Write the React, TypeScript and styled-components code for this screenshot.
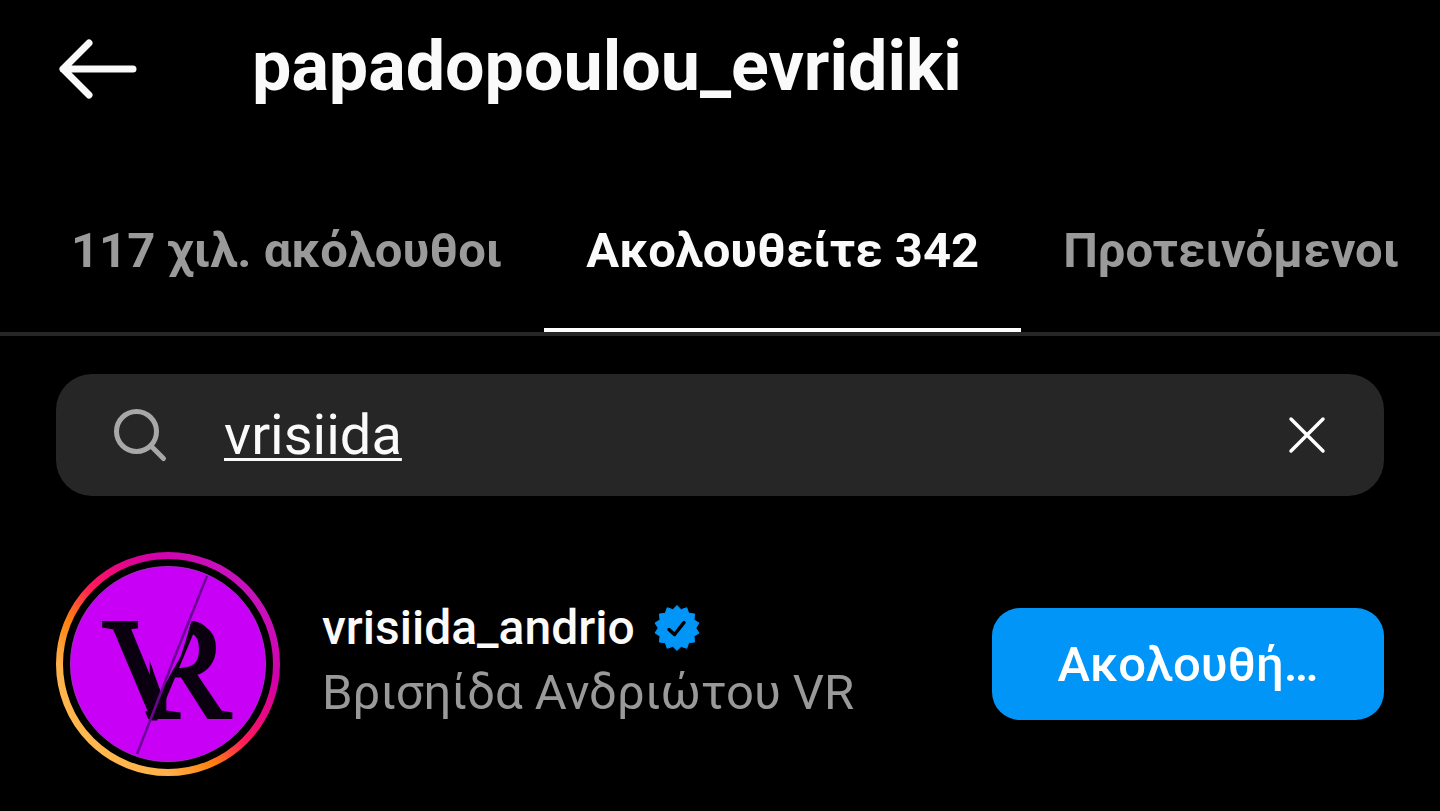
import React, { useState } from "react";
import styled, { createGlobalStyle } from "styled-components";

const GlobalStyle = createGlobalStyle`
  * { box-sizing: border-box; }
  body {
    margin: 0;
    background: #000;
    color: #fafafa;
    font-family: Roboto, "Noto Sans", sans-serif;
    overflow-x: hidden;
  }
  button, input { font: inherit; color: inherit; }
`;

const Header = styled.header`
  display: flex;
  align-items: center;
  gap: 112px;
  height: 136px;
  padding: 0 56px;
`;

const IconButton = styled.button`
  display: flex;
  flex: none;
  padding: 0;
  border: 0;
  background: none;
  cursor: pointer;
`;

const Title = styled.h1`
  margin: 0;
  padding-bottom: 4px;
  font-size: 70px;
  line-height: 84px;
  font-weight: 700;
`;

const TabBar = styled.nav`
  display: flex;
  margin-top: 32px;
  padding-left: 29px;
  border-bottom: 4px solid #262626;
  overflow: hidden;
`;

const Tab = styled.button<{ $active?: boolean }>`
  flex: none;
  height: 164px;
  padding: 6px 42px 0;
  border: 0;
  border-bottom: 4px solid ${(p) => (p.$active ? "#fff" : "transparent")};
  background: none;
  color: ${(p) => (p.$active ? "#fafafa" : "#9a9a9a")};
  font-size: 49px;
  line-height: 56px;
  font-weight: 700;
  white-space: nowrap;
  cursor: pointer;
`;

const Main = styled.main`
  display: flex;
  flex-direction: column;
  gap: 56px;
  padding: 38px 56px 35px;
`;

const SearchBox = styled.label`
  display: flex;
  align-items: center;
  height: 122px;
  padding: 0 56px;
  border-radius: 36px;
  background: #262626;
`;

const SearchInput = styled.input`
  flex: 1;
  min-width: 0;
  height: 80px;
  margin-left: 56px;
  padding: 0;
  border: 0;
  outline: 0;
  background: none;
  font-size: 56px;
  text-decoration: underline 3px;
  text-underline-offset: 4px;
`;

const UserRow = styled.article`
  display: flex;
  align-items: center;
`;

const AvatarLink = styled.a`
  display: flex;
  flex: none;
`;

const UserInfo = styled.div`
  flex: 1;
  min-width: 0;
  margin-left: 42px;
  padding-bottom: 8px;
`;

const Username = styled.a`
  display: flex;
  align-items: center;
  gap: 19px;
  color: #fafafa;
  font-size: 48px;
  line-height: 65px;
  font-weight: 500;
  text-decoration: none;
`;

const FullName = styled.p`
  margin: 0;
  color: #999;
  font-size: 49px;
  line-height: 65px;
  white-space: nowrap;
`;

const FollowButton = styled.button`
  flex: none;
  width: 392px;
  height: 112px;
  padding: 0 56px;
  border: 0;
  border-radius: 28px;
  background: #0095f6;
  color: #fff;
  font-size: 49px;
  font-weight: 500;
  cursor: pointer;
`;

const BackIcon = () => (
  <svg width="84" height="64" viewBox="0 0 84 64" fill="none" stroke="#fafafa" strokeWidth="7" strokeLinecap="round" strokeLinejoin="round" aria-hidden="true">
    <path d="M33 7 7 33l26 26M7 33h70" />
  </svg>
);

const SearchIcon = () => (
  <svg width="56" height="56" viewBox="0 0 56 56" fill="none" stroke="#a8a8a8" strokeWidth="5" strokeLinecap="round" aria-hidden="true">
    <circle cx="24.500" cy="24.500" r="20" />
    <path d="M39 39l12.500 12.500" />
  </svg>
);

const ClearIcon = () => (
  <svg width="42" height="42" viewBox="0 0 42 42" fill="none" stroke="#fff" strokeWidth="3.500" strokeLinecap="round" aria-hidden="true">
    <path d="M5 5l32 32M37 5 5 37" />
  </svg>
);

const sealPoints = Array.from({ length: 28 }, (_, i) => {
  const r = i % 2 === 0 ? 22.5 : 18.8;
  const a = (Math.PI * i) / 14 - Math.PI / 2;
  return `${(23 + r * Math.cos(a)).toFixed(2)},${(23 + r * Math.sin(a)).toFixed(2)}`;
}).join(" ");

const VerifiedIcon = () => (
  <svg width="46" height="46" viewBox="0 0 46 46" role="img" aria-label="Επαληθευμένος">
    <polygon points={sealPoints} fill="#0095f6" stroke="#0095f6" strokeLinejoin="round" />
    <path d="M15 24.500l5.500 5 9.500-12" fill="none" stroke="#000" strokeWidth="3.500" strokeLinecap="round" strokeLinejoin="round" />
  </svg>
);

const Avatar = () => (
  <svg width="224" height="224" viewBox="0 0 224 224" role="img" aria-label="VR">
    <defs>
      <linearGradient id="ring" x1="0.15" y1="0.85" x2="0.85" y2="0.15">
        <stop offset="0" stopColor="#ffb84d" />
        <stop offset="0.14" stopColor="#ffb04a" />
        <stop offset="0.32" stopColor="#ff7f0f" />
        <stop offset="0.5" stopColor="#ff1a5c" />
        <stop offset="0.62" stopColor="#ee0a7c" />
        <stop offset="0.8" stopColor="#d300a8" />
        <stop offset="1" stopColor="#c711bd" />
      </linearGradient>
      {/* V keeps its left stroke, R keeps what lies right of the slash */}
      <clipPath id="monogram">
        <path d="M0 0H82V76L104 138 101 176H96L56 80H0Z" />
        <path d="M136 68 146 72 156 80 163 92V112L224 145V176H98V160L106 138 125 104Z" />
      </clipPath>
    </defs>
    <circle cx="112" cy="112" r="108.500" fill="none" stroke="url(#ring)" strokeWidth="7" />
    <circle cx="112" cy="112" r="97.500" fill="#c800f5" stroke="#a52bc4" />
    <text x="46 79" y="165" clipPath="url(#monogram)" fill="#0a0010" stroke="#0a0010" strokeWidth="3" fontFamily="'Liberation Serif', serif" fontSize="144">VR</text>
    <path d="M151 24 119 104 104 143 81 202" fill="none" stroke="#6c0496" strokeWidth="2.500" />
  </svg>
);

export default function App() {
  const [query, setQuery] = useState("vrisiida");
  return (
    <>
      <GlobalStyle />
      <Header>
        <IconButton aria-label="Πίσω"><BackIcon /></IconButton>
        <Title>papadopoulou_evridiki</Title>
      </Header>
      <TabBar>
        <Tab>117 χιλ. ακόλουθοι</Tab>
        <Tab $active aria-current="page">Ακολουθείτε 342</Tab>
        <Tab>Προτεινόμενοι</Tab>
      </TabBar>
      <Main>
        <SearchBox>
          <SearchIcon />
          <SearchInput type="text" aria-label="Αναζήτηση" value={query} onChange={(e) => setQuery(e.target.value)} />
          <IconButton type="button" aria-label="Καθαρισμός" onClick={() => setQuery("")}><ClearIcon /></IconButton>
        </SearchBox>
        <UserRow>
          <AvatarLink href="#story"><Avatar /></AvatarLink>
          <UserInfo>
            <Username href="#profile">vrisiida_andrio<VerifiedIcon /></Username>
            <FullName>Βρισηίδα Ανδριώτου VR</FullName>
          </UserInfo>
          <FollowButton>Ακολουθή…</FollowButton>
        </UserRow>
      </Main>
    </>
  );
}
